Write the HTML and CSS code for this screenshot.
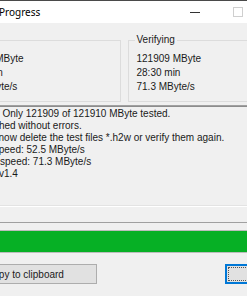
FILE: index.html
```html
<!DOCTYPE html>
<html lang="en">

<head>
    <meta charset="UTF-8">
    <meta name="viewport" content="width=device-width, initial-scale=1.0">
    <title>H2testw | Progress</title>
    <link rel="stylesheet" href="styles.css">
</head>

<body>
    <div class="window">
        <div class="titlebar">
            <span class="title">Progress</span>
            <span class="cap cap-min"><span class="min-glyph"></span></span>
            <span class="cap cap-max"><span class="max-glyph"></span></span>
            <span class="cap cap-close"></span>
        </div>
        <div class="client">
            <div class="groups">
                <fieldset class="group">
                    <legend>Writing</legend>
                    <div>121910 MByte</div>
                    <div>38:41 min</div>
                    <div>52.5 MByte/s</div>
                </fieldset>
                <fieldset class="group">
                    <legend>Verifying</legend>
                    <div>121909 MByte</div>
                    <div>28:30 min</div>
                    <div>71.3 MByte/s</div>
                </fieldset>
            </div>
            <div class="log">Warning: Only 121909 of 121910 MByte tested.
Test finished without errors.
You can now delete the test files *.h2w or verify them again.
Writing speed: 52.5 MByte/s
Reading speed: 71.3 MByte/s
H2testw v1.4</div>
            <div class="separator"></div>
            <div class="progress">
                <div class="progress-fill" style="width: 100%"></div>
            </div>
            <div class="buttons">
                <button class="btn btn-copy">Copy to clipboard</button>
                <button class="btn btn-ok"><span class="focus">OK</span></button>
            </div>
        </div>
    </div>
</body>

</html>
```
FILE: styles.css
```css
html,
body {
    margin: 0;
    height: 100%;
    overflow: hidden;
}

body {
    background-color: #f0f0f0;
    font-family: "Liberation Sans", Arial, sans-serif;
    font-size: 10px;
    color: #1a1a1a;
}

.window {
    width: 356px;
    margin-left: -54px;
    border-top: 1px solid #4a4a4a;
}

.titlebar {
    display: flex;
    height: 22px;
    background: #fff;
}

.title {
    flex: 1;
    padding-left: 53px;
    font-family: "Noto Sans", sans-serif;
    font-size: 10px;
    line-height: 22px;
    color: #000;
}

.cap {
    width: 43px;
    display: flex;
    align-items: center;
    justify-content: center;
}

.min-glyph {
    width: 10px;
    height: 1px;
    background: #333;
}

.max-glyph {
    width: 8px;
    height: 8px;
    border: 1px solid #cfcfcf;
}

.client {
    padding: 11px 7px 0 7px;
}

.groups {
    display: grid;
    grid-template-columns: 1fr 1fr;
    gap: 7px;
}

.group {
    margin: 0;
    min-width: 0;
    padding: 6px 8px 6px 8px;
    border: 1px solid #dcdcdc;
    line-height: 14px;
    height: 54px;
}

.group:first-child {
    padding-left: 5px;
}

.group legend {
    padding: 0 2px;
    margin-left: -2px;
    line-height: 12px;
}

.log {
    margin-top: 3px;
    height: 98px;
    padding: 2px 0 0 6px;
    white-space: pre;
    line-height: 12px;
    border: 1px solid;
    border-color: #a0a0a0 #fff #fff #a0a0a0;
    box-shadow: inset 1px 1px 0 #8c8c8c, inset -1px -1px 0 #e3e3e3;
    overflow: hidden;
}

.separator {
    margin-top: 15px;
    height: 1px;
    background: #a0a0a0;
}

.progress {
    margin-top: 7px;
    height: 21px;
    border: 1px solid #bcbcbc;
    background: #e6e6e6;
}

.progress-fill {
    height: 100%;
    background: #06b025;
}

.buttons {
    margin-top: 11px;
    display: flex;
    justify-content: space-between;
}

.btn {
    height: 20px;
    padding: 0;
    font-family: "Liberation Sans", Arial, sans-serif;
    font-size: 10px;
    color: #1a1a1a;
    background: #e1e1e1;
    border: 1px solid #adadad;
}

.btn-copy {
    width: 144px;
}

.btn-ok {
    width: 70px;
    border-color: #0078d7;
    box-shadow: inset 0 0 0 1px #0078d7;
    padding: 2px;
}

.btn-ok .focus {
    display: block;
    height: 100%;
    line-height: 14px;
    border: 1px dotted #555;
    box-sizing: border-box;
}
```
